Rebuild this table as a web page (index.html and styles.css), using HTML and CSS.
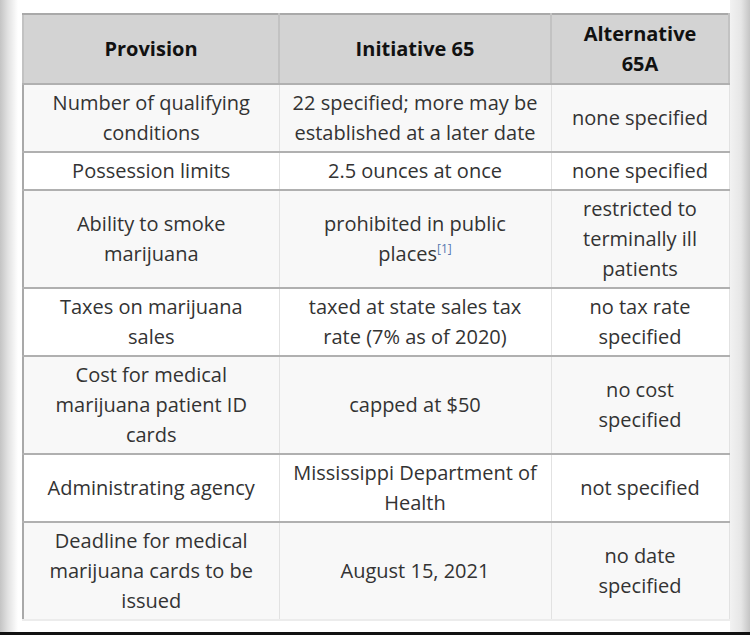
FILE: index.html
```html
<!DOCTYPE html>
<html>
<head>
<meta charset="utf-8">
<link rel="stylesheet" href="styles.css">
</head>
<body>
<div class="page">
  <div class="edge edge-left"></div>
  <main class="content">
    <table class="compare">
      <colgroup>
        <col class="c1"><col class="c2"><col class="c3">
      </colgroup>
      <thead>
        <tr><th>Provision</th><th>Initiative 65</th><th>Alternative<br>65A</th></tr>
      </thead>
      <tbody>
        <tr class="alt"><td>Number of qualifying<br>conditions</td><td>22 specified; more may be<br>established at a later date</td><td>none specified</td></tr>
        <tr><td>Possession limits</td><td>2.5 ounces at once</td><td>none specified</td></tr>
        <tr class="alt"><td>Ability to smoke<br>marijuana</td><td>prohibited in public<br>places<sup class="ref">[1]</sup></td><td>restricted to<br>terminally ill<br>patients</td></tr>
        <tr><td>Taxes on marijuana<br>sales</td><td>taxed at state sales tax<br>rate (7% as of 2020)</td><td>no tax rate<br>specified</td></tr>
        <tr class="alt"><td>Cost for medical<br>marijuana patient ID<br>cards</td><td>capped at $50</td><td>no cost<br>specified</td></tr>
        <tr><td>Administrating agency</td><td>Mississippi Department of<br>Health</td><td>not specified</td></tr>
        <tr class="alt"><td>Deadline for medical<br>marijuana cards to be<br>issued</td><td>August 15, 2021</td><td>no date<br>specified</td></tr>
      </tbody>
    </table>
  </main>
  <div class="edge edge-right"></div>
</div>
<div class="bottom-bar"></div>
</body>
</html>
```

FILE: styles.css
```css
html, body {
  margin: 0;
  padding: 0;
  background: #ffffff;
}
body {
  width: 750px;
  height: 635px;
  overflow: hidden;
  font-family: "Open Sans", "Liberation Sans", sans-serif;
  color: #333333;
}
.page {
  display: flex;
  height: 632px;
}
.edge {
  flex: none;
}
.edge-left {
  width: 18px;
  background: linear-gradient(to right, #c4c4c4 0%, #e2e2e2 45%, #ffffff 100%);
}
.edge-right {
  width: 22px;
  background: linear-gradient(to right, #f2f2f2 0%, #e6e6e6 50%, #bdbdbd 100%);
}
.content {
  flex: 1;
  padding: 13px 0 0 4px;
  box-sizing: border-box;
}
.bottom-bar {
  height: 3px;
  background: #111111;
}
.compare {
  border-collapse: collapse;
  table-layout: fixed;
  width: 706px;
  border-left: 2px solid #a9a9a9;
  font-size: 20px;
  line-height: 30px;
}
.c1 { width: 256px; }
.c2 { width: 272px; }
.c3 { width: 178px; }
.compare th,
.compare td {
  text-align: center;
  vertical-align: middle;
  padding: 3px 2px;
  border-top: 2px solid #b0b0b0;
  border-bottom: 2px solid #b0b0b0;
  border-left: 1px solid #e2e2e2;
  border-right: 1px solid #e2e2e2;
}
.compare th {
  padding: 4px 2px;
  background: #d3d3d3;
  color: #111111;
  font-weight: 700;
  border-left: 2px solid #c2c2c2;
  border-right: 2px solid #c2c2c2;
  border-top: 2px solid #a9a9a9;
}
.compare tr.alt td {
  background: #f8f8f8;
}
.compare tbody tr:last-child td {
  border-bottom: 2px solid #ececec;
}
.ref {
  font-size: 12px;
  line-height: 0;
  color: #5878b0;
  vertical-align: 8px;
}
```
